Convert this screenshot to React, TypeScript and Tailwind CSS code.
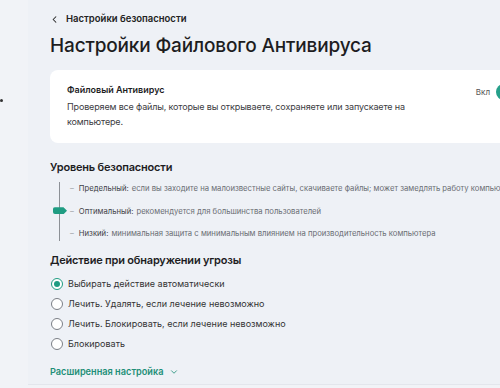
import { ChevronDown, ChevronLeft } from 'lucide-react';

const font = { fontFamily: 'Inter, "Noto Sans", sans-serif' };

const levels = [
  { label: 'Предельный:', text: 'если вы заходите на малоизвестные сайты, скачиваете файлы; может замедлять работу компьютера' },
  { label: 'Оптимальный:', text: 'рекомендуется для большинства пользователей' },
  { label: 'Низкий:', text: 'минимальная защита с минимальным влиянием на производительность компьютера' },
];

const actions = [
  'Выбирать действие автоматически',
  'Лечить. Удалять, если лечение невозможно',
  'Лечить. Блокировать, если лечение невозможно',
  'Блокировать',
];

function Radio({ checked }: { checked: boolean }) {
  return (
    <span
      className={`flex h-[12px] w-[12px] shrink-0 items-center justify-center rounded-full border ${
        checked ? 'border-[#1f9c82]' : 'border-[#7b7f86]'
      } bg-white`}
    >
      {checked && <span className="h-[6px] w-[6px] rounded-full bg-[#1f9c82]" />}
    </span>
  );
}

export default function App() {
  return (
    <div className="flex h-[388px] w-[500px] overflow-hidden bg-[#eef1f6] text-[#1d1d1f]" style={font}>
      {/* sidebar edge */}
      <div className="relative w-[28px] shrink-0 bg-[#f1f3f7]">
        <span className="absolute left-0 top-[99px] h-[3px] w-[3px] rounded-sm bg-[#333]" />
      </div>

      <div className="flex min-w-0 flex-1 flex-col">
        <div className="flex flex-col pl-[22px] pt-[12px]">
          <div className="flex items-center gap-[6px] text-[9.5px] font-semibold text-[#222]">
            <ChevronLeft size={11} strokeWidth={2.2} className="-ml-[1px]" />
            <span>Настройки безопасности</span>
          </div>
          <h1 className="mt-[7px] text-[19px] font-medium leading-[26px] tracking-[-0.15px]">
            Настройки Файлового Антивируса
          </h1>

          <div className="mt-[11px] flex w-[490px] items-start justify-between rounded-[8px] bg-white pb-[14px] pl-[17px] pr-[16px] pt-[13px]">
            <div className="w-[385px]">
              <div className="text-[9px] font-semibold leading-[14px]">Файловый Антивирус</div>
              <p className="mt-[2px] text-[9px] leading-[15px] tracking-[-0.15px] text-[#3c3c3f]">
                Проверяем все файлы, которые вы открываете, сохраняете или запускаете на компьютере.
              </p>
            </div>
            <div className="flex items-center gap-[6px] pt-[1px]">
              <span className="text-[8px] text-[#555]">Вкл</span>
              <span className="h-[16px] w-[28px] rounded-full bg-[#26a08a]" />
            </div>
          </div>

          <h2 className="mt-[16px] text-[11px] font-semibold leading-[16px] tracking-[-0.2px]">Уровень безопасности</h2>

          <div className="relative ml-[9px] mt-[7px] flex flex-col gap-[9.5px] border-l border-[#8c9096] pb-[1px] pl-[10px]">
            <span
              className="absolute left-[-7px] top-[25px] h-[7px] w-[14px] bg-[#1f9c82]"
              style={{ clipPath: 'polygon(0 0, 75% 0, 100% 50%, 75% 100%, 0 100%)', borderRadius: '2px' }}
            />
            {levels.map((l) => (
              <div key={l.label} className="flex items-center gap-[5px] whitespace-nowrap text-[7.7px] leading-[13px]">
                <span className="text-[#9a9da3]">–</span>
                <span className="text-[#3f4146]">{l.label}</span>
                <span className="-ml-[2px] text-[#6a6d73]">{l.text}</span>
              </div>
            ))}
          </div>

          <h2 className="mt-[11px] text-[11px] font-semibold leading-[16px] tracking-[-0.2px]">
            Действие при обнаружении угрозы
          </h2>

          <div className="mt-[8px] flex flex-col gap-[5px] pl-[1px]">
            {actions.map((a, i) => (
              <label key={a} className="flex items-center gap-[5px] text-[9px] leading-[15px] text-[#333]">
                <Radio checked={i === 0} />
                <span>{a}</span>
              </label>
            ))}
          </div>

          <div className="mt-[14px] flex items-center gap-[6px] text-[9.2px] font-semibold text-[#1f8f78]">
            <span>Расширенная настройка</span>
            <ChevronDown size={10} strokeWidth={2} />
          </div>
        </div>
        <div className="mt-[5px] flex-1 border-t border-[#e3e6ec] bg-[#f1f3f7]" />
      </div>
    </div>
  );
}
